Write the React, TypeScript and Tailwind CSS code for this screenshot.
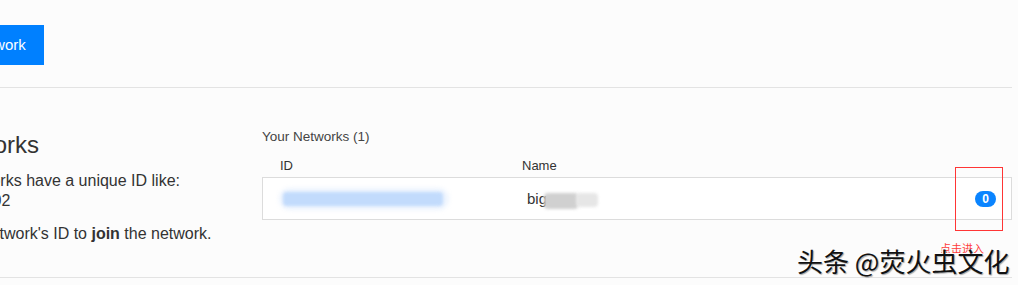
import React from "react";

export default function App() {
  return (
    <div className="relative w-[1018px] h-[285px] overflow-hidden bg-[#fcfcfc] text-[#333] font-['Liberation_Sans',Arial,sans-serif]">
      <div className="w-[1012px] overflow-hidden">
        {/* top bar */}
        <div className="h-[88px] pt-[25px] border-b border-[#e3e3e3]">
          <button className="ml-[-109px] h-[40px] px-[18px] bg-[#0080ff] text-white text-[15px] leading-[40px] whitespace-nowrap">
            Create A Network
          </button>
        </div>

        {/* networks section */}
        <div className="flex h-[190px] border-b border-[#e3e3e3]">
          <div className="ml-[-61px] w-[323px] shrink-0 pt-[44px] whitespace-nowrap">
            <h3 className="text-[24px] leading-[26px] text-[#333]">Networks</h3>
            <p className="ml-[16px] mt-[13px] text-[16px] leading-[20px]">
              Networks have a unique ID like:
              <br />
              <span className="ml-[2px]">000002</span>
            </p>
            <p className="ml-[16px] mt-[13px] text-[16px] leading-[20px]">
              the network's ID to <b>join</b> the network.
            </p>
          </div>

          <div className="flex-1 pt-[40px]">
            <div className="text-[13.5px] leading-[18px] text-[#444]">Your Networks (1)</div>
            <div className="mt-[11px] flex pl-[18px] text-[13px] leading-[18px] text-[#333]">
              <div className="w-[242px]">ID</div>
              <div>Name</div>
            </div>
            <div className="mt-[2px] h-[43px] bg-white border border-[#dcdcdc] flex items-center">
              <div className="w-[264px] pl-[20px] relative h-[20px] flex items-center">
                <div className="absolute left-[16px] top-[-1px] w-[170px] h-[22px] bg-[#edf4fe] blur-[2px] rounded-full" />
                <div className="relative w-[160px] h-[14px] bg-[#c2dbfc] blur-[1.5px] rounded-sm" />
              </div>
              <div className="relative flex items-center text-[15px] leading-[20px] text-[#333]">
                <span>big</span>
                <span className="ml-[-3px] mt-[4px] w-[34px] h-[16px] bg-[#d0d0d0] blur-[1.5px] rounded-sm" />
                <span className="ml-[-2px] mt-[2px] w-[22px] h-[14px] bg-[#e6e6e6] blur-[1.5px] rounded-sm" />
              </div>
              <div className="ml-auto mr-[15px] w-[21px] h-[16px] rounded-full bg-[#0a84ff] text-white text-[12px] font-bold leading-[16px] text-center">
                0
              </div>
            </div>
          </div>
        </div>
      </div>

      {/* annotation overlays */}
      <div className="absolute left-[955px] top-[167px] w-[48px] h-[64px] border border-[#ff3535]" />
      <div className="absolute left-[940px] top-[242px] text-[11px] leading-[12px] text-[#ff3b3b] font-['Noto_Sans_CJK_SC',sans-serif] whitespace-nowrap">
        点击进入
      </div>
      <div className="absolute left-[797px] top-[247px] text-[26px] leading-[28px] text-[#111] font-['Noto_Sans_CJK_SC',sans-serif] whitespace-nowrap [text-shadow:-1px_-1px_0_#fff,1px_1px_1px_rgba(0,0,0,0.35)]">
        头条 @荧火虫文化
      </div>
    </div>
  );
}
